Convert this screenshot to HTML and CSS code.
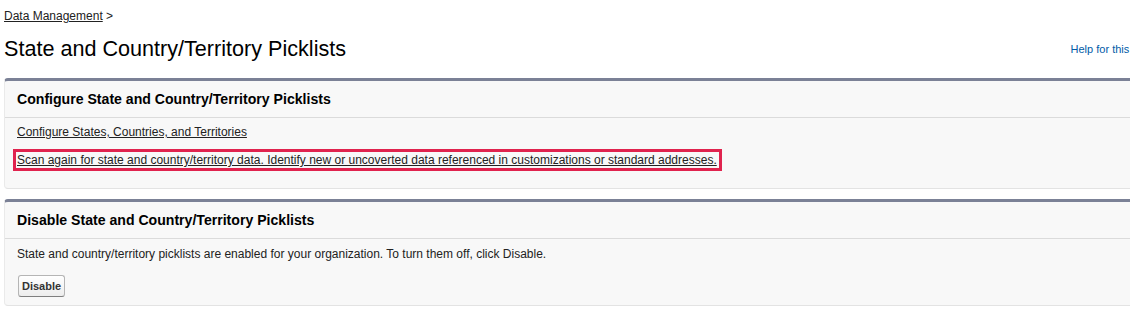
FILE: index.html
```html
<!DOCTYPE html>
<html lang="en">
<head>
  <meta charset="UTF-8" />
  <title>State and Country/Territory Picklists</title>
  <link rel="stylesheet" href="styles.css">
</head>
<body>

  <div class="page">
    <div class="breadcrumb">
      <a href="#">Data Management</a> &gt;
    </div>

    <div class="title-row">
      <h1>State and Country/Territory Picklists</h1>
      <a href="#" class="help">Help for this Page</a>
    </div>

    <div class="block">
      <h2>Configure State and Country/Territory Picklists</h2>
      <div class="block-body">
        <p><a href="#">Configure States, Countries, and Territories</a></p>
        <p class="marked"><a href="#">Scan again for state and country/territory data. Identify new or uncoverted data referenced in customizations or standard addresses.</a></p>
      </div>
    </div>

    <div class="block">
      <h2>Disable State and Country/Territory Picklists</h2>
      <div class="block-body disable-body">
        <p>State and country/territory picklists are enabled for your organization. To turn them off, click Disable.</p>
        <button class="btn">Disable</button>
      </div>
    </div>
  </div>

</body>
</html>
```

FILE: styles.css
```css
body {
  margin: 0;
  background-color: #fff;
  color: #222;
  font-family: "Liberation Sans", Arial, sans-serif;
  font-size: 12px;
  overflow: hidden;
}

.page {
  width: 1160px;
  padding: 9px 0 0 4px;
}

a {
  color: #222;
}

.breadcrumb {
  line-height: 14px;
  color: #222;
}

.title-row {
  display: flex;
  justify-content: space-between;
  align-items: center;
  margin-top: 14px;
  height: 24px;
}

h1 {
  margin: 0;
  font-size: 21.6px;
  font-weight: normal;
  color: #000;
}

.help {
  color: #015ba7;
  font-size: 11px;
  text-decoration: none;
  padding-right: 6px;
}

.block {
  margin-top: 17px;
  background-color: #f8f8f8;
  border-top: 3px solid #7b8196;
  border-left: 1px solid #eaeaea;
  border-bottom: 1px solid #e3e3e3;
  border-radius: 4px;
}

.block + .block {
  margin-top: 10px;
}

h2 {
  margin: 0;
  padding: 10px 12px;
  font-size: 14.1px;
  line-height: 16px;
  color: #000;
  border-bottom: 1px solid #dbdbdb;
}

.block-body {
  padding: 7px 12px 4px;
}

.disable-body {
  padding-top: 8px;
}

.block-body p {
  margin: 0 0 14px;
  line-height: 14px;
}

.marked {
  display: inline-block;
  border: 3px solid #e0234e;
  padding: 1px 2px 1px 1px;
  margin: -4px 0 13px -4px !important;
}

.btn {
  display: block;
  font-family: inherit;
  font-size: 11px;
  font-weight: bold;
  color: #333;
  height: 22px;
  padding: 0 3px;
  margin: 1px 0 4px 1px;
  background: linear-gradient(#fff, #ededed);
  border: 1px solid #b5b5b5;
  border-bottom-color: #7f7f7f;
  border-radius: 3px;
}
```
